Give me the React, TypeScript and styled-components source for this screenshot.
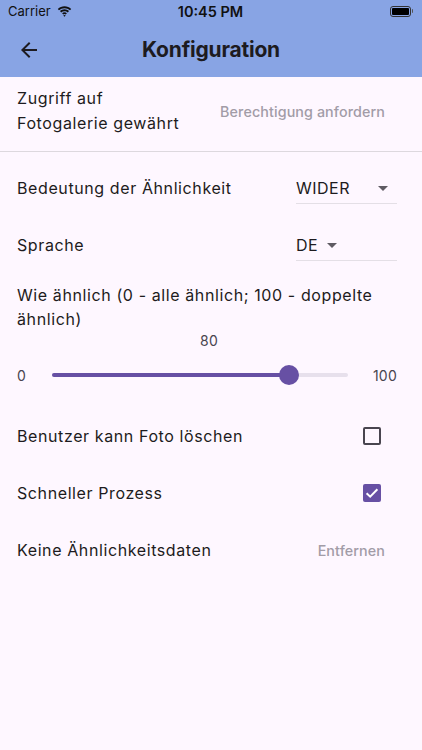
import React from "react";
import styled, { createGlobalStyle } from "styled-components";

const GlobalStyle = createGlobalStyle`
  html, body {
    margin: 0;
    padding: 0;
    background: #fef7ff;
  }
  body {
    font-family: Inter, "Noto Sans", sans-serif;
    color: #1d1b20;
  }
`;

const Page = styled.div`
  width: 422px;
  min-height: 750px;
  background: #fef7ff;
  display: flex;
  flex-direction: column;
`;

const Header = styled.header`
  background: #88a4e4;
  display: flex;
  flex-direction: column;
`;

const StatusBar = styled.div`
  height: 22px;
  display: grid;
  grid-template-columns: 1fr auto 1fr;
  align-items: center;
  padding: 0 9px 0 8px;
  font-size: 13px;
  color: #111;
`;

const Carrier = styled.div`
  display: flex;
  align-items: center;
  gap: 6px;
`;

const Clock = styled.div`
  font-weight: 600;
  font-size: 14.5px;
`;

const Battery = styled.div`
  justify-self: end;
  display: flex;
  align-items: center;
  gap: 1px;
`;

const BatteryBody = styled.div`
  width: 17px;
  height: 7px;
  border: 1.5px solid #333;
  border-radius: 3px;
  padding: 1px;
  box-sizing: content-box;
  &::after {
    content: "";
    display: block;
    width: 100%;
    height: 100%;
    background: #000;
    border-radius: 1px;
  }
`;

const BatteryNub = styled.div`
  width: 1.5px;
  height: 4px;
  background: #555;
  border-radius: 0 1px 1px 0;
`;

const AppBar = styled.div`
  height: 55px;
  display: grid;
  grid-template-columns: 56px 1fr 56px;
  align-items: center;
`;

const BackButton = styled.button`
  border: 0;
  background: none;
  padding: 0;
  width: 56px;
  height: 48px;
  display: flex;
  align-items: center;
  justify-content: center;
  color: #1d1b20;
  margin-left: 1px;
`;

const Title = styled.h1`
  margin: 0;
  text-align: center;
  font-size: 21px;
  font-weight: 700;
  letter-spacing: -0.2px;
  color: #1d1b20;
`;

const Content = styled.main`
  display: flex;
  flex-direction: column;
  padding-top: 1px;
`;

const PermissionRow = styled.div`
  height: 66px;
  padding: 0 25px 0 17px;
  display: flex;
  align-items: center;
  justify-content: space-between;
`;

const Label = styled.span<{ $wrap?: boolean }>`
  font-size: 16px;
  line-height: ${(p) => (p.$wrap ? "25px" : "24px")};
  letter-spacing: 0.6px;
  color: #1d1b20;
`;

const TextButton = styled.button`
  border: 0;
  background: none;
  padding: 0 12px;
  height: 40px;
  font-family: inherit;
  font-size: 14.3px;
  font-weight: 500;
  letter-spacing: 0.1px;
  color: #a29ca7;
`;

const Divider = styled.hr`
  border: 0;
  height: 1px;
  margin: 7px 0 0;
  background: #ddd8de;
`;

const Settings = styled.div`
  display: flex;
  flex-direction: column;
  padding: 0 25px 0 17px;
`;

const Row = styled.div<{ $top: number }>`
  height: 48px;
  margin-top: ${(p) => p.$top}px;
  display: flex;
  align-items: center;
  justify-content: space-between;
`;

const Dropdown = styled.div`
  width: 101px;
  box-sizing: border-box;
  margin-top: 4px;
  padding-bottom: 3px;
  border-bottom: 1px solid #e4dfe6;
  display: flex;
  align-items: center;
  font-size: 16px;
  line-height: 24px;
  letter-spacing: 0.5px;
  color: #1d1b20;
`;

const Caret = styled.span<{ $gap: number }>`
  width: 0;
  height: 0;
  margin-left: ${(p) => p.$gap}px;
  border-left: 5px solid transparent;
  border-right: 5px solid transparent;
  border-top: 5px solid #5f5b63;
`;

const SliderLabel = styled.div`
  margin-top: 14px;
  font-size: 16px;
  line-height: 24px;
  letter-spacing: 0.6px;
`;

const SliderValue = styled.div`
  text-align: center;
  font-size: 14px;
  line-height: 20px;
  letter-spacing: 0.25px;
  color: #49454f;
  padding-left: 4px;
`;

const SliderRow = styled.div`
  height: 48px;
  display: flex;
  align-items: center;
  font-size: 14px;
  letter-spacing: 0.25px;
  color: #49454f;
`;

const Track = styled.div`
  flex: 1;
  margin: 0 25px 0 26px;
  height: 4px;
  border-radius: 2px;
  background: #e7e0ec;
  position: relative;
`;

const ActiveTrack = styled.div`
  height: 100%;
  border-radius: 2px;
  background: #6750a4;
`;

const Thumb = styled.div`
  position: absolute;
  top: 50%;
  width: 20px;
  height: 20px;
  border-radius: 50%;
  background: #6750a4;
  transform: translate(-50%, -50%);
`;

const Checkbox = styled.div<{ $checked?: boolean }>`
  width: 18px;
  height: 18px;
  box-sizing: border-box;
  margin-right: 16px;
  border-radius: 2px;
  border: ${(p) => (p.$checked ? "0" : "2px solid #49454f")};
  background: ${(p) => (p.$checked ? "#6750a4" : "transparent")};
  display: flex;
  align-items: center;
  justify-content: center;
`;

const WifiIcon = () => (
  <svg width="15" height="11" viewBox="0 0 15 11">
    <path d="M7.5 2.2c2.1 0 4 .8 5.5 2.1l1.2-1.3C12.4 1.3 10 .3 7.5.3S2.6 1.3.8 3l1.2 1.3c1.5-1.3 3.4-2.1 5.5-2.1z" fill="#111" />
    <path d="M7.5 5.2c1.3 0 2.4.5 3.3 1.2l1.2-1.3C10.8 4 9.2 3.3 7.5 3.3S4.2 4 3 5.1l1.2 1.3c.9-.7 2-1.2 3.3-1.2z" fill="#111" />
    <path d="M7.5 8.1c.5 0 .9.2 1.2.4L9.9 7.2C9.3 6.7 8.4 6.3 7.5 6.3s-1.8.4-2.4.9l1.2 1.3c.3-.2.7-.4 1.2-.4z" fill="#111" />
    <path d="M7.5 10.7 8.7 9.4c-.3-.3-.7-.5-1.2-.5s-.9.2-1.2.5z" fill="#111" />
  </svg>
);

const ArrowBack = () => (
  <svg width="24" height="24" viewBox="0 0 24 24">
    <path d="M20 11H7.83l5.59-5.59L12 4l-8 8 8 8 1.41-1.41L7.83 13H20v-2z" fill="currentColor" />
  </svg>
);

const Check = () => (
  <svg width="18" height="18" viewBox="0 0 18 18">
    <path d="M3.6 9.2l3.6 3.5 7.2-7.4" stroke="#fff" strokeWidth="2" fill="none" />
  </svg>
);

const App = () => {
  const similarity = 80;

  return (
    <Page>
      <GlobalStyle />
      <Header>
        <StatusBar>
          <Carrier>
            Carrier
            <WifiIcon />
          </Carrier>
          <Clock>10:45 PM</Clock>
          <Battery>
            <BatteryBody />
            <BatteryNub />
          </Battery>
        </StatusBar>
        <AppBar>
          <BackButton aria-label="Zurück">
            <ArrowBack />
          </BackButton>
          <Title>Konfiguration</Title>
          <span />
        </AppBar>
      </Header>

      <Content>
        <PermissionRow>
          <Label $wrap>
            Zugriff auf
            <br />
            Fotogalerie gewährt
          </Label>
          <TextButton>Berechtigung anfordern</TextButton>
        </PermissionRow>
        <Divider />

        <Settings>
          <Row $top={12}>
            <Label>Bedeutung der Ähnlichkeit</Label>
            <Dropdown>
              WIDER
              <Caret $gap={28} />
            </Dropdown>
          </Row>
          <Row $top={9}>
            <Label>Sprache</Label>
            <Dropdown>
              DE
              <Caret $gap={9} />
            </Dropdown>
          </Row>

          <SliderLabel>Wie ähnlich (0 - alle ähnlich; 100 - doppelte ähnlich)</SliderLabel>
          <SliderValue>{similarity}</SliderValue>
          <SliderRow>
            <span>0</span>
            <Track>
              <ActiveTrack style={{ width: `${similarity}%` }} />
              <Thumb style={{ left: `${similarity}%` }} />
            </Track>
            <span>100</span>
          </SliderRow>

          <Row $top={13}>
            <Label>Benutzer kann Foto löschen</Label>
            <Checkbox />
          </Row>
          <Row $top={9}>
            <Label>Schneller Prozess</Label>
            <Checkbox $checked>
              <Check />
            </Checkbox>
          </Row>
          <Row $top={9}>
            <Label>Keine Ähnlichkeitsdaten</Label>
            <TextButton>Entfernen</TextButton>
          </Row>
        </Settings>
      </Content>
    </Page>
  );
};

export default App;
